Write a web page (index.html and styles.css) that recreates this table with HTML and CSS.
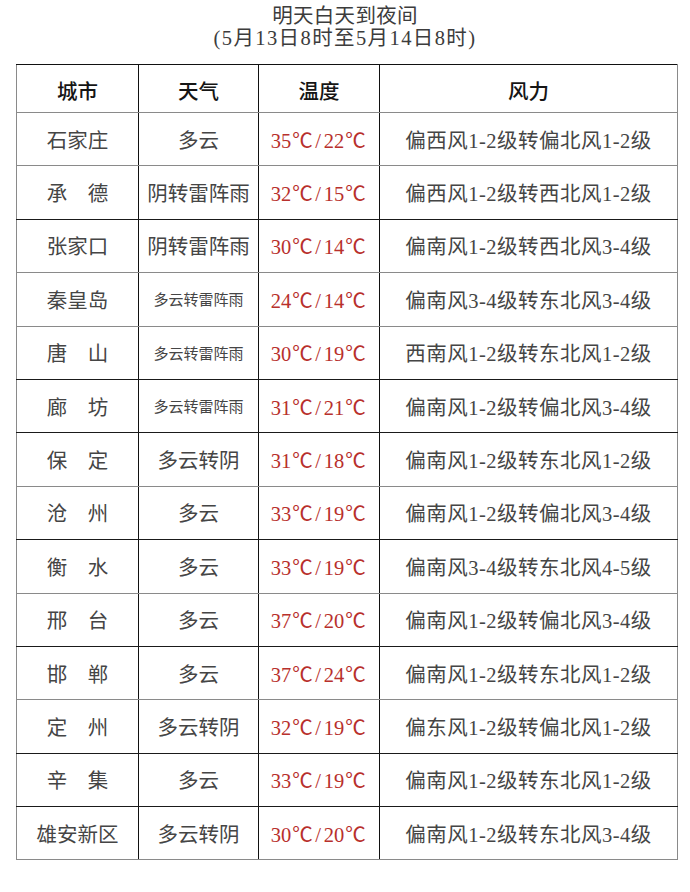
FILE: index.html
```html
<!DOCTYPE html>
<html lang="zh-CN">
<head>
<meta charset="utf-8">
<title>明天白天到夜间</title>
<link rel="stylesheet" href="styles.css">
</head>
<body>
<div class="page">
  <header class="title">
    <div class="title-line">明天白天到夜间</div>
    <div class="title-line sub">(5月13日8时至5月14日8时)</div>
  </header>
  <table class="forecast">
    <colgroup>
      <col class="c-city"><col class="c-wx"><col class="c-temp"><col class="c-wind">
    </colgroup>
    <thead>
      <tr class="head"><th>城市</th><th>天气</th><th>温度</th><th>风力</th></tr>
    </thead>
    <tbody>
      <tr class="lt"><td>石家庄</td><td>多云</td><td class="temp">35<span class="deg">℃</span><span class="sl">/</span>22<span class="deg">℃</span></td><td class="wind">偏西风1-2级转偏北风1-2级</td></tr>
      <tr class="dk"><td>承　德</td><td>阴转雷阵雨</td><td class="temp">32<span class="deg">℃</span><span class="sl">/</span>15<span class="deg">℃</span></td><td class="wind">偏西风1-2级转西北风1-2级</td></tr>
      <tr class="lt"><td>张家口</td><td>阴转雷阵雨</td><td class="temp">30<span class="deg">℃</span><span class="sl">/</span>14<span class="deg">℃</span></td><td class="wind">偏南风1-2级转西北风3-4级</td></tr>
      <tr class="lt"><td>秦皇岛</td><td class="small">多云转雷阵雨</td><td class="temp">24<span class="deg">℃</span><span class="sl">/</span>14<span class="deg">℃</span></td><td class="wind">偏南风3-4级转东北风3-4级</td></tr>
      <tr class="dk"><td>唐　山</td><td class="small">多云转雷阵雨</td><td class="temp">30<span class="deg">℃</span><span class="sl">/</span>19<span class="deg">℃</span></td><td class="wind">西南风1-2级转东北风1-2级</td></tr>
      <tr class="dk"><td>廊　坊</td><td class="small">多云转雷阵雨</td><td class="temp">31<span class="deg">℃</span><span class="sl">/</span>21<span class="deg">℃</span></td><td class="wind">偏南风1-2级转偏北风3-4级</td></tr>
      <tr class="lt"><td>保　定</td><td>多云转阴</td><td class="temp">31<span class="deg">℃</span><span class="sl">/</span>18<span class="deg">℃</span></td><td class="wind">偏南风1-2级转东北风1-2级</td></tr>
      <tr class="dk"><td>沧　州</td><td>多云</td><td class="temp">33<span class="deg">℃</span><span class="sl">/</span>19<span class="deg">℃</span></td><td class="wind">偏南风1-2级转偏北风3-4级</td></tr>
      <tr class="lt"><td>衡　水</td><td>多云</td><td class="temp">33<span class="deg">℃</span><span class="sl">/</span>19<span class="deg">℃</span></td><td class="wind">偏南风3-4级转东北风4-5级</td></tr>
      <tr class="dk"><td>邢　台</td><td>多云</td><td class="temp">37<span class="deg">℃</span><span class="sl">/</span>20<span class="deg">℃</span></td><td class="wind">偏南风1-2级转偏北风3-4级</td></tr>
      <tr class="lt"><td>邯　郸</td><td>多云</td><td class="temp">37<span class="deg">℃</span><span class="sl">/</span>24<span class="deg">℃</span></td><td class="wind">偏南风1-2级转东北风1-2级</td></tr>
      <tr class="dk"><td>定　州</td><td>多云转阴</td><td class="temp">32<span class="deg">℃</span><span class="sl">/</span>19<span class="deg">℃</span></td><td class="wind">偏东风1-2级转偏北风1-2级</td></tr>
      <tr class="dk"><td>辛　集</td><td>多云</td><td class="temp">33<span class="deg">℃</span><span class="sl">/</span>19<span class="deg">℃</span></td><td class="wind">偏南风1-2级转东北风1-2级</td></tr>
      <tr class="last"><td>雄安新区</td><td>多云转阴</td><td class="temp">30<span class="deg">℃</span><span class="sl">/</span>20<span class="deg">℃</span></td><td class="wind">偏南风1-2级转东北风3-4级</td></tr>
    </tbody>
  </table>
</div>
</body>
</html>
```

FILE: styles.css
```css
html, body {
  margin: 0;
  padding: 0;
  background: #ffffff;
}

body {
  font-family: "Liberation Serif", "Noto Sans CJK SC", serif;
  color: #454545;
}

.page {
  width: 690px;
  height: 892px;
  padding-top: 5px;
  box-sizing: border-box;
}

.title {
  text-align: center;
  color: #3c3c3c;
  font-size: 20.5px;
  line-height: 22px;
  height: 59px;
}

.title-line {
  letter-spacing: 0.3px;
}

.title-line.sub {
  letter-spacing: 1.4px;
}

.forecast {
  margin-left: 16px;
  width: 661px;
  border-collapse: collapse;
  table-layout: fixed;
}

.c-city { width: 122px; }
.c-wx { width: 120px; }
.c-temp { width: 121px; }
.c-wind { width: 298px; }

.forecast th,
.forecast td {
  padding: 0;
  text-align: center;
  vertical-align: middle;
  white-space: nowrap;
  border-left: 1px solid #111;
  border-right: 1px solid #111;
  font-size: 20.5px;
  font-weight: 400;
}

.forecast th:first-child,
.forecast td:first-child {
  border-left: 1px solid #8a8a8a;
}

.forecast th:last-child,
.forecast td:last-child {
  border-right: 1px solid #8a8a8a;
}

.head th {
  height: 48px;
  color: #151515;
  font-weight: 500;
  border-top: 1px solid #111;
  border-bottom: 1px solid #8a8a8a;
  padding-top: 2px;
  box-sizing: border-box;
}

.forecast td {
  height: 53.4px;
  padding-bottom: 1px;
  box-sizing: border-box;
}

.lt td { border-bottom: 1px solid #8a8a8a; }
.dk td { border-bottom: 1px solid #1a1a1a; }
.last td { border-bottom: 1px solid #8a8a8a; }

.forecast td.small {
  font-size: 15px;
}

.forecast td.temp {
  color: #b8302c;
  font-size: 20.5px;
}

.deg {
  display: inline-block;
  width: 22px;
  padding-left: 1px;
  text-align: left;
}

.sl {
  display: inline-block;
  margin: 0 3px 0 1px;
}

.forecast td.wind {
  letter-spacing: 0.5px;
}
```
